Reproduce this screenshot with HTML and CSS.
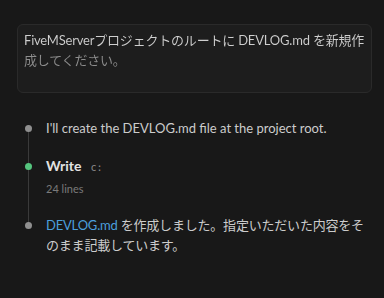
FILE: index.html
```html
<!DOCTYPE html>
<html lang="ja">
<head>
<meta charset="utf-8">
<link rel="stylesheet" href="styles.css">
</head>
<body>
<div class="prompt">
  <p class="prompt-text">FiveMServerプロジェクトのルートに DEVLOG.md を新規作<br>成してください。</p>
</div>
<div class="timeline">
  <div class="item">
    <span class="dot"></span>
    <p class="msg">I'll create the DEVLOG.md file at the project root.</p>
  </div>
  <div class="item">
    <span class="dot dot-green"></span>
    <p class="tool"><span class="tool-name">Write</span><span class="tool-path">c:</span></p>
    <p class="tool-meta">24 lines</p>
  </div>
  <div class="item">
    <span class="dot"></span>
    <p class="msg msg-ja"><span class="link">DEVLOG.md</span> を作成しました。指定いただいた内容をそのまま記載しています。</p>
  </div>
</div>
</body>
</html>
```
FILE: styles.css
```css
* { box-sizing: border-box; }
html, body {
  margin: 0;
  padding: 0;
  background: #181818;
}
body {
  width: 384px;
  height: 298px;
  overflow: hidden;
  font-family: "Lato", "Noto Sans CJK JP", sans-serif;
  font-size: 13px;
  color: #cccccc;
}
p { margin: 0; }
.prompt {
  margin: 24px 12px 0 17px;
  height: 69px;
  border: 1px solid #2a2a2a;
  border-radius: 6px;
  background: #1d1d1d;
  padding: 5px 0 5px 6px;
}
.prompt-text {
  line-height: 20px;
  letter-spacing: -0.2px;
  white-space: nowrap;
  background: linear-gradient(to bottom, #cfcfcf 0, #cfcfcf 20px, #8e8e8e 20px, #8e8e8e 40px);
  -webkit-background-clip: text;
  background-clip: text;
  color: transparent;
}
.timeline {
  position: relative;
  margin-top: 25px;
  padding: 0 12px 0 46px;
}
.timeline::before {
  content: "";
  position: absolute;
  left: 28px;
  top: 10px;
  height: 95px;
  width: 1px;
  background: #3a3a3a;
}
.item {
  position: relative;
  margin-bottom: 18px;
}
.dot {
  position: absolute;
  left: -21px;
  top: 7px;
  width: 7px;
  height: 7px;
  border-radius: 50%;
  background: #8f8f8f;
}
.dot-green { background: #55c57e; }
.msg { line-height: 20px; }
.msg-ja { letter-spacing: -0.2px; }
.tool { line-height: 20px; }
.tool-name {
  font-weight: 700;
  font-size: 14px;
  color: #e2e2e2;
}
.tool-path {
  margin-left: 9px;
  font-family: "DejaVu Sans Mono", monospace;
  font-size: 10px;
  color: #8a8a8a;
}
.tool-meta {
  margin-top: 3px;
  font-size: 11px;
  line-height: 16px;
  color: #7a7a7a;
}
.link { color: #4b9fdc; }
```
